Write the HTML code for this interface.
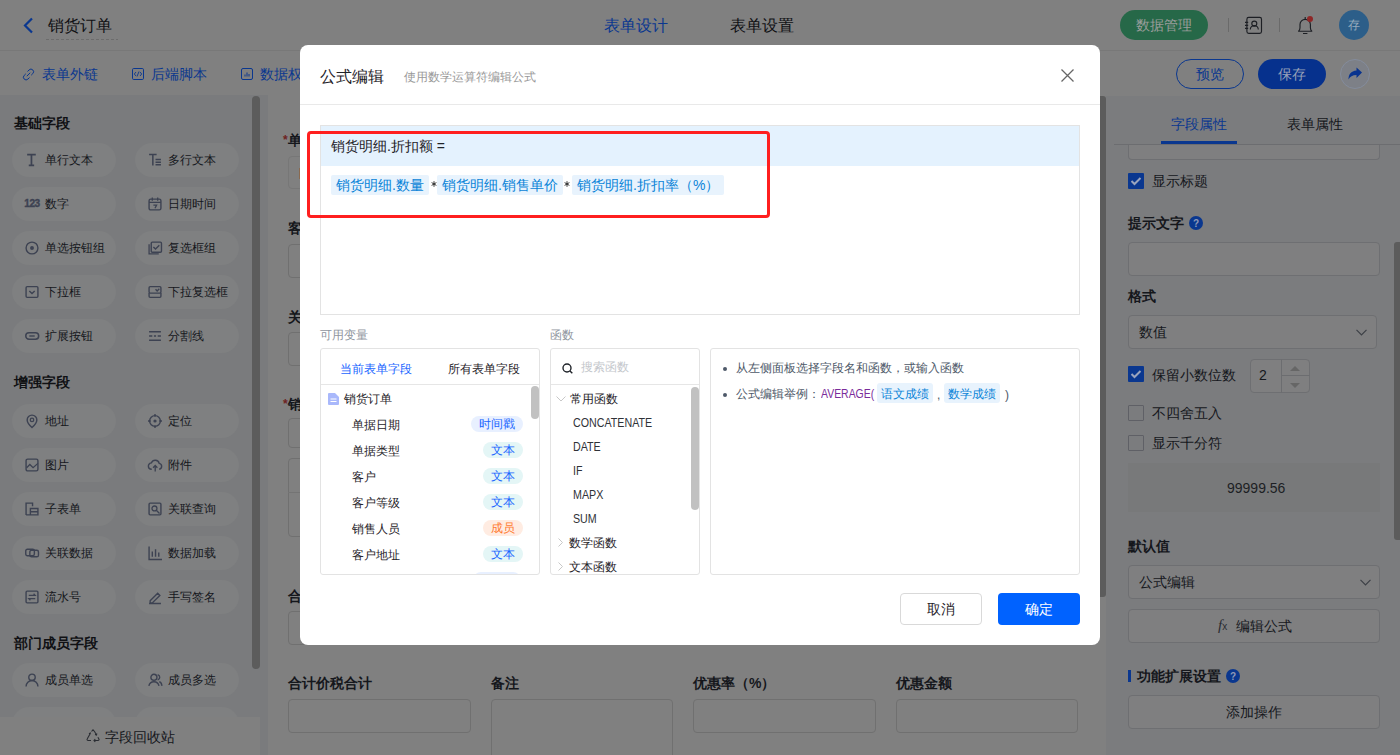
<!DOCTYPE html>
<html><head><meta charset="utf-8">
<style>
*{box-sizing:border-box;margin:0;padding:0}
html,body{width:1400px;height:755px;overflow:hidden;background:#fff;font-family:"Liberation Sans",sans-serif;color:#1f2329}
.abs{position:absolute}
#page{position:absolute;left:0;top:0;width:1400px;height:755px;background:#fff}
.hdr{position:absolute;left:0;top:0;width:1400px;height:51px;background:#808080;border-bottom:1px solid #787878}
.tb{position:absolute;left:0;top:51px;width:1400px;height:45px;background:#808080}
.side{position:absolute;left:0;top:95px;width:268px;height:660px;background:#7a7b7d}
.canvas{position:absolute;left:268px;top:96px;width:838px;height:659px;background:#808080}
.rp{position:absolute;left:1106px;top:96px;width:294px;height:659px;background:#7b7c7e}
.t{position:absolute;white-space:nowrap;line-height:1}
.pill{position:absolute;width:104px;height:34px;border-radius:17px;background:#7f8081}
.pill span{position:absolute;left:33px;top:10px;font-size:12px;line-height:14px;color:#15171c}
.pill svg{position:absolute;left:13px;top:10px;overflow:visible}
.sect{position:absolute;left:14px;font-size:14px;font-weight:bold;line-height:16px;color:#101114}
#mask{position:absolute;left:0;top:0;width:1400px;height:755px;background:rgba(0,0,0,.5)}
#modal{position:absolute;left:300px;top:45px;width:800px;height:600px;background:#fff;border-radius:8px;overflow:hidden}

.tok{position:absolute;top:49px;height:20px;background:#e8f3fd;border-radius:2px;color:#0a84d8;font-size:14px;line-height:20px;padding-left:5px;white-space:nowrap}
.tok2{position:absolute;top:34px;height:20px;background:#e8f3fd;border-radius:3px;color:#0a84d8;font-size:12px;line-height:22px;padding-left:4px;white-space:nowrap}
.pnl{border:1px solid #e3e3e3;border-radius:3px;overflow:hidden}
.vr{left:31px;font-size:12px;line-height:14px;color:#1f2329}
.tag{position:absolute;left:162px;width:40px;height:16px;border-radius:8px;font-size:12px;line-height:16px;text-align:center;white-space:nowrap}
.tb1{background:#e8f0ff;color:#1a66ff}
.tc{background:#e4f6f6;color:#1a66ff}
.to{background:#ffece2;color:#ff7a2e}
.fn{left:22px;font-size:12px;line-height:14px;color:#2f3237;transform:scaleX(.89);transform-origin:0 0}

.flbl{font-size:14px;font-weight:bold;line-height:16px;color:#15171c}
.finp{border:1px solid #707070;border-radius:4px}
.rinp{border:1px solid #6e6f72;border-radius:4px;background:#7f7f80}
</style></head><body>
















<div id="page">
  <div class="hdr">
    <svg class="abs" style="left:22px;top:17px" width="12" height="17" viewBox="0 0 12 17"><path d="M10 1.5L3 8.5l7 7" stroke="#0a378f" stroke-width="2.2" fill="none"/></svg>
    <div class="t" style="left:48px;top:17px;font-size:16px;line-height:17px;color:#101114">销货订单</div>
    <div class="abs" style="left:46px;top:39px;width:72px;height:1px;background:repeating-linear-gradient(90deg,#6c6c6c 0 3px,transparent 3px 5px)"></div>
    <div class="t" style="left:604px;top:17px;font-size:16px;line-height:17px;color:#0a378f">表单设计</div>
    <div class="t" style="left:730px;top:17px;font-size:16px;line-height:17px;color:#101114">表单设置</div>
    <div class="abs" style="left:1120px;top:10px;width:88px;height:30px;border-radius:15px;background:#266848"></div>
    <div class="t" style="left:1136px;top:17px;font-size:14px;line-height:16px;color:#9a9d9b">数据管理</div>
    <div class="abs" style="left:1228px;top:18px;width:1px;height:14px;background:#6a6a6a"></div>
    <svg class="abs" style="left:1244px;top:16px" width="20" height="19" viewBox="0 0 20 19"><rect x="2.9" y="1.4" width="14.6" height="16" rx="1.8" stroke="#1d1f24" stroke-width="1.15" fill="none"/><circle cx="10.3" cy="7.6" r="2.5" stroke="#1d1f24" stroke-width="1.15" fill="none"/><path d="M6.3 13.6a4 4 0 0 1 8 0M1 6.3h3.2M1 9.3h3.2M1 12.3h3.2" stroke="#1d1f24" stroke-width="1.15" fill="none"/></svg>
    <div class="abs" style="left:1279px;top:18px;width:1px;height:14px;background:#6a6a6a"></div>
    <svg class="abs" style="left:1296px;top:15px" width="18" height="20" viewBox="0 0 18 20"><path d="M2.6 16.2c.9-.9 1.4-2 1.4-3.4V9.6a5.2 5.2 0 0 1 10.4 0v3.2c0 1.4.5 2.5 1.4 3.4z" stroke="#1d1f24" stroke-width="1.15" fill="none" stroke-linejoin="round"/><path d="M7 18.5h4.4M9.2 2v2" stroke="#1d1f24" stroke-width="1.15"/><circle cx="14" cy="3.9" r="3" fill="#8e2727"/></svg>
    <div class="abs" style="left:1339px;top:10px;width:30px;height:30px;border-radius:15px;background:#2c5e89"></div>
    <div class="t" style="left:1348px;top:18px;font-size:12px;line-height:14px;color:#97abbd">存</div>
  </div>
  <div class="tb">
    <svg class="abs" style="left:22px;top:17px" width="13" height="13" viewBox="0 0 13 13"><path d="M5.5 3.5l1.6-1.6a2.6 2.6 0 0 1 3.7 3.7L9.2 7.2M7.5 9.5L5.9 11.1a2.6 2.6 0 0 1-3.7-3.7L3.8 5.8M4.8 8.2l3.4-3.4" stroke="#0a378f" stroke-width="1" fill="none"/></svg>
    <div class="t" style="left:42px;top:15px;font-size:14px;line-height:16px;color:#0a378f">表单外链</div>
    <svg class="abs" style="left:132px;top:17px" width="12" height="12" viewBox="0 0 12 12"><rect x="0.5" y="0.5" width="11" height="11" rx="1.2" stroke="#0a378f" stroke-width="1" fill="none"/><path d="M4 4L2.3 6 4 8M8 4l1.7 2L8 8M7 3.5L5 8.5" stroke="#0a378f" stroke-width="0.9" fill="none"/></svg>
    <div class="t" style="left:151px;top:15px;font-size:14px;line-height:16px;color:#0a378f">后端脚本</div>
    <svg class="abs" style="left:241px;top:17px" width="12" height="12" viewBox="0 0 12 12"><rect x="0.5" y="0.5" width="11" height="11" rx="1.5" stroke="#0a378f" stroke-width="1" fill="none"/><path d="M4 8.5V6.5M6 8.5V4.5M8 8.5V6" stroke="#0a378f" stroke-width="1" fill="none"/></svg>
    <div class="t" style="left:260px;top:15px;font-size:14px;line-height:16px;color:#0a378f">数据权限</div>
    <div class="abs" style="left:1176px;top:8px;width:68px;height:30px;border-radius:15px;border:1px solid #0a378f"></div>
    <div class="t" style="left:1196px;top:15px;font-size:14px;line-height:16px;color:#0a378f">预览</div>
    <div class="abs" style="left:1258px;top:8px;width:68px;height:30px;border-radius:15px;background:#06318d"></div>
    <div class="t" style="left:1278px;top:15px;font-size:14px;line-height:16px;color:#97a0b8">保存</div>
    <div class="abs" style="left:1340px;top:8px;width:30px;height:30px;border-radius:15px;border:1px solid #848c9c;background:#7d8087"></div>
    <svg class="abs" style="left:1347px;top:15px" width="16" height="16" viewBox="0 0 16 16"><path d="M15 6.5L9.5 1.5v3C4 5 1.5 8.5 1.5 13.5c1.5-3 4-4.5 8-4.5v3z" fill="#08338f"/></svg>
  </div>
  <div class="side">
    <div class="sect" style="top:20px">基础字段</div>
    <div class="sect" style="top:279px">增强字段</div>
    <div class="sect" style="top:540px">部门成员字段</div>
    <div class="abs" style="left:252px;top:1px;width:8px;height:573px;border-radius:4px;background:#5c5c5c"></div>
  </div>
  <div class="pill" style="left:12px;top:143px"><svg width="14" height="14" viewBox="0 0 13 13"><path d="M2 1.5h8M6 1.5v10M3.5 11.5h5" stroke="#3d4252" stroke-width="1.6" fill="none"/></svg><span>单行文本</span></div>
<div class="pill" style="left:135px;top:143px"><svg width="14" height="14" viewBox="0 0 13 13"><path d="M1 1.5h7M4.5 1.5v10M7 6h5M7 8.5h5M7 11h5" stroke="#3d4252" stroke-width="1.4" fill="none"/></svg><span>多行文本</span></div>
<div class="pill" style="left:12px;top:187px"><svg width="14" height="14" viewBox="0 0 13 13"><text x="-0.6" y="9.3" font-family="Liberation Sans" font-weight="700" font-size="9.4" letter-spacing="-0.5" stroke="#3d4252" stroke-width="0.35" fill="#3d4252">123</text></svg><span>数字</span></div>
<div class="pill" style="left:135px;top:187px"><svg width="14" height="14" viewBox="0 0 13 13"><rect x="1" y="2" width="11" height="10" rx="1.5" stroke="#3d4252" stroke-width="1.3" fill="none"/><path d="M1 5h11M4 0.5v3M9 0.5v3M5 7.5h3l-1.5 3" stroke="#3d4252" stroke-width="1.2" fill="none"/></svg><span>日期时间</span></div>
<div class="pill" style="left:12px;top:231px"><svg width="14" height="14" viewBox="0 0 13 13"><circle cx="6.5" cy="6.5" r="5.5" stroke="#3d4252" stroke-width="1.3" fill="none"/><circle cx="6.5" cy="6.5" r="1.8" fill="#3d4252"/></svg><span>单选按钮组</span></div>
<div class="pill" style="left:135px;top:231px"><svg width="14" height="14" viewBox="0 0 13 13"><path d="M1 3v9h9" stroke="#3d4252" stroke-width="1.2" fill="none"/><rect x="3" y="1" width="9.5" height="9.5" rx="1" stroke="#3d4252" stroke-width="1.3" fill="none"/><path d="M5 5.5l2 2 3.5-3.5" stroke="#3d4252" stroke-width="1.3" fill="none"/></svg><span>复选框组</span></div>
<div class="pill" style="left:12px;top:275px"><svg width="14" height="14" viewBox="0 0 13 13"><rect x="1" y="1.5" width="11" height="10" rx="1" stroke="#3d4252" stroke-width="1.3" fill="none"/><path d="M4 5.5l2.5 2.5 2.5-2.5" stroke="#3d4252" stroke-width="1.3" fill="none"/></svg><span>下拉框</span></div>
<div class="pill" style="left:135px;top:275px"><svg width="14" height="14" viewBox="0 0 13 13"><rect x="1" y="1.5" width="11" height="6" rx="1" stroke="#3d4252" stroke-width="1.3" fill="none"/><path d="M1 7.5v3a1 1 0 0 0 1 1h9a1 1 0 0 0 1-1v-3M7 4l1.5 1.5 2-2" stroke="#3d4252" stroke-width="1.3" fill="none"/></svg><span>下拉复选框</span></div>
<div class="pill" style="left:12px;top:319px"><svg width="14" height="14" viewBox="0 0 13 13"><rect x="0.7" y="3.5" width="12" height="6" rx="3" stroke="#3d4252" stroke-width="1.4" fill="none"/><path d="M4 6.5h5" stroke="#3d4252" stroke-width="1.3"/></svg><span>扩展按钮</span></div>
<div class="pill" style="left:135px;top:319px"><svg width="14" height="14" viewBox="0 0 13 13"><path d="M1 2.5h11M1 6.5h3M5.5 6.5h2M9 6.5h3M1 10.5h11" stroke="#3d4252" stroke-width="1.3" fill="none"/></svg><span>分割线</span></div>
<div class="pill" style="left:12px;top:404px"><svg width="14" height="14" viewBox="0 0 13 13"><path d="M6.5 12.5s-4.5-4-4.5-7a4.5 4.5 0 0 1 9 0c0 3-4.5 7-4.5 7z" stroke="#3d4252" stroke-width="1.3" fill="none"/><circle cx="6.5" cy="5.5" r="1.6" stroke="#3d4252" stroke-width="1.2" fill="none"/></svg><span>地址</span></div>
<div class="pill" style="left:135px;top:404px"><svg width="14" height="14" viewBox="0 0 13 13"><circle cx="6.5" cy="6.5" r="5" stroke="#3d4252" stroke-width="1.3" fill="none"/><circle cx="6.5" cy="6.5" r="1.5" fill="#3d4252"/><path d="M6.5 0v2.5M6.5 10.5v2.5M0 6.5h2.5M10.5 6.5h2.5" stroke="#3d4252" stroke-width="1.3"/></svg><span>定位</span></div>
<div class="pill" style="left:12px;top:448px"><svg width="14" height="14" viewBox="0 0 13 13"><rect x="1" y="1" width="11" height="11" rx="1.5" stroke="#3d4252" stroke-width="1.3" fill="none"/><path d="M1.5 9l3-3 3 3 4.5-4" stroke="#3d4252" stroke-width="1.2" fill="none"/></svg><span>图片</span></div>
<div class="pill" style="left:135px;top:448px"><svg width="14" height="14" viewBox="0 0 13 13"><path d="M3.5 10.5a3 3 0 0 1-.3-6 3.8 3.8 0 0 1 7.2.5 2.8 2.8 0 0 1 0 5.5" stroke="#3d4252" stroke-width="1.3" fill="none"/><path d="M6.7 12.5V7M4.7 9l2-2 2 2" stroke="#3d4252" stroke-width="1.2" fill="none"/></svg><span>附件</span></div>
<div class="pill" style="left:12px;top:492px"><svg width="14" height="14" viewBox="0 0 13 13"><path d="M1 12V1h6v3M1 12h11V6H5v6M5 9h7" stroke="#3d4252" stroke-width="1.3" fill="none"/></svg><span>子表单</span></div>
<div class="pill" style="left:135px;top:492px"><svg width="14" height="14" viewBox="0 0 13 13"><rect x="1" y="1" width="11" height="11" rx="1" stroke="#3d4252" stroke-width="1.3" fill="none"/><circle cx="6" cy="6" r="2.3" stroke="#3d4252" stroke-width="1.2" fill="none"/><path d="M7.7 7.7l3 3" stroke="#3d4252" stroke-width="1.2"/></svg><span>关联查询</span></div>
<div class="pill" style="left:12px;top:536px"><svg width="14" height="14" viewBox="0 0 13 13"><rect x="0.7" y="3" width="8" height="6" rx="1.5" stroke="#3d4252" stroke-width="1.3" fill="none"/><rect x="4.5" y="4" width="8" height="6" rx="1.5" stroke="#3d4252" stroke-width="1.3" fill="none"/></svg><span>关联数据</span></div>
<div class="pill" style="left:135px;top:536px"><svg width="14" height="14" viewBox="0 0 13 13"><path d="M1 0.5v12h12M4 5v5M7 3v7M10 6v4" stroke="#3d4252" stroke-width="1.3" fill="none"/></svg><span>数据加载</span></div>
<div class="pill" style="left:12px;top:580px"><svg width="14" height="14" viewBox="0 0 13 13"><rect x="1" y="1" width="11" height="11" rx="1" stroke="#3d4252" stroke-width="1.3" fill="none"/><path d="M3.5 5h6l-1.5-1.5M9.5 8h-6l1.5 1.5" stroke="#3d4252" stroke-width="1.1" fill="none"/></svg><span>流水号</span></div>
<div class="pill" style="left:135px;top:580px"><svg width="14" height="14" viewBox="0 0 13 13"><path d="M2 10l7-7 2 2-7 7H2zM1 12.5h11" stroke="#3d4252" stroke-width="1.3" fill="none"/></svg><span>手写签名</span></div>
<div class="pill" style="left:12px;top:663px"><svg width="14" height="14" viewBox="0 0 13 13"><circle cx="6.5" cy="4" r="3" stroke="#3d4252" stroke-width="1.3" fill="none"/><path d="M1 12.5a5.5 5.5 0 0 1 11 0" stroke="#3d4252" stroke-width="1.3" fill="none"/></svg><span>成员单选</span></div>
<div class="pill" style="left:135px;top:663px"><svg width="14" height="14" viewBox="0 0 13 13"><circle cx="5.5" cy="4" r="2.8" stroke="#3d4252" stroke-width="1.3" fill="none"/><path d="M0.8 12a4.8 4.8 0 0 1 9.4 0M9 1.5a2.6 2.6 0 0 1 0 5M10.5 8a4 4 0 0 1 2.3 4" stroke="#3d4252" stroke-width="1.3" fill="none"/></svg><span>成员多选</span></div>
<div class="pill" style="left:12px;top:707px"><svg width="14" height="14" viewBox="0 0 13 13"><circle cx="6.5" cy="4" r="3" stroke="#3d4252" stroke-width="1.3" fill="none"/><path d="M1 12.5a5.5 5.5 0 0 1 11 0" stroke="#3d4252" stroke-width="1.3" fill="none"/></svg><span>部门单选</span></div>
<div class="pill" style="left:135px;top:707px"><svg width="14" height="14" viewBox="0 0 13 13"><circle cx="5.5" cy="4" r="2.8" stroke="#3d4252" stroke-width="1.3" fill="none"/><path d="M0.8 12a4.8 4.8 0 0 1 9.4 0M9 1.5a2.6 2.6 0 0 1 0 5M10.5 8a4 4 0 0 1 2.3 4" stroke="#3d4252" stroke-width="1.3" fill="none"/></svg><span>部门多选</span></div>
  <div class="abs" style="left:0;top:717px;width:260px;height:38px;background:#808080"></div>
  <svg class="abs" style="left:86px;top:729px" width="14" height="14" viewBox="0 0 14 14"><path d="M5.5 2.5L7 0.8l1.5 1.7 2 3.3M10.8 4.5l-.3 1.5-1.5-.5M4 5L2 8.5 1.2 10a1 1 0 0 0 .9 1.5H5M3 4.3l1 .7.5-1.5M8 11.5h4a1 1 0 0 0 .9-1.5l-1-1.8M9.3 10l-1.3 1.5 1.3 1.5" stroke="#2a2d33" stroke-width="1.1" fill="none"/></svg>
  <div class="t" style="left:105px;top:729px;font-size:14px;line-height:16px;color:#15171c">字段回收站</div>
  <div class="canvas">
    <div class="t flbl" style="left:15px;top:36px"><span style="color:#6e2222;font-size:12px;vertical-align:1px">*</span>单据编号</div>
<div class="abs" style="left:20px;top:60px;width:192px;height:33px;border:1px solid #777;border-radius:4px"></div>
<div class="abs" style="left:31px;top:72px;width:1px;height:11px;background:#8a6a50"></div>
<div class="t flbl" style="left:20px;top:124px">客户</div>
<div class="abs finp" style="left:20px;top:148px;width:192px;height:34px"></div>
<div class="t flbl" style="left:20px;top:213px">关联客户</div>
<div class="abs finp" style="left:20px;top:236px;width:192px;height:34px"></div>
<div class="t flbl" style="left:15px;top:300px"><span style="color:#6e2222;font-size:12px;vertical-align:1px">*</span>销货明细</div>
<div class="abs finp" style="left:20px;top:322px;width:192px;height:30px"></div>
<div class="abs finp" style="left:20px;top:362px;width:792px;height:79px"></div>
<div class="abs" style="left:20px;top:396px;width:812px;height:1px;background:#747474"></div>
<div class="t flbl" style="left:20px;top:492px">合计金额</div>
<div class="abs finp" style="left:20px;top:515px;width:192px;height:34px"></div>
<div class="t flbl" style="left:20px;top:579px">合计价税合计</div>
<div class="abs finp" style="left:20px;top:603px;width:183px;height:34px"></div>
<div class="t flbl" style="left:223px;top:579px">备注</div>
<div class="abs finp" style="left:223px;top:603px;width:182px;height:81px"></div>
<div class="t flbl" style="left:425px;top:579px">优惠率（%）</div>
<div class="abs finp" style="left:425px;top:603px;width:183px;height:34px"></div>
<div class="t flbl" style="left:628px;top:579px">优惠金额</div>
<div class="abs finp" style="left:628px;top:603px;width:182px;height:34px"></div>
<div class="abs" style="left:832px;top:0;width:6px;height:501px;border-radius:0 3px 3px 0;background:#5c5c5c"></div>
  </div>
  <div class="rp">
    <div class="abs rinp" style="left:22px;top:30px;width:252px;height:34px;border-top:none;border-radius:0 0 4px 4px"></div>
<div class="abs" style="left:0;top:0;width:294px;height:48px;background:#7b7c7e"></div>
<div class="t" style="left:65px;top:20px;font-size:14px;line-height:16px;color:#0a378f">字段属性</div>
<div class="t" style="left:181px;top:20px;font-size:14px;line-height:16px;color:#15171c">表单属性</div>
<div class="abs" style="left:8px;top:48px;width:294px;height:1px;background:#6c6d70"></div>
<div class="abs" style="left:55px;top:45px;width:76px;height:3px;background:#0a378f"></div>
<svg class="abs" style="left:22px;top:77px" width="16" height="16" viewBox="0 0 16 16"><rect width="16" height="16" rx="1" fill="#0a378f"/><path d="M3.5 8l3 3 6-6" stroke="#9aa4bd" stroke-width="2" fill="none"/></svg>
<div class="t" style="left:46px;top:77px;font-size:14px;line-height:16px;color:#15171c">显示标题</div>
<div class="t" style="left:22px;top:119px;font-size:14px;line-height:16px;font-weight:bold;color:#15171c">提示文字</div>
<svg class="abs" style="left:83px;top:120px" width="14" height="14" viewBox="0 0 14 14"><circle cx="7" cy="7" r="7" fill="#0a378f"/><text x="7" y="11" text-anchor="middle" font-family="Liberation Sans" font-weight="bold" font-size="10" fill="#8e9ab6">?</text></svg>
<div class="abs rinp" style="left:22px;top:146px;width:252px;height:34px;"></div>
<div class="t" style="left:22px;top:192px;font-size:14px;line-height:16px;font-weight:bold;color:#15171c">格式</div>
<div class="abs rinp" style="left:22px;top:219px;width:249px;height:34px;"></div>
<div class="t" style="left:33px;top:228px;font-size:14px;line-height:16px;color:#15171c">数值</div>
<svg class="abs" style="left:250px;top:233px" width="11" height="7" viewBox="0 0 11 7"><path d="M0.5 0.8L5.5 5.8L10.5 0.8" stroke="#3d4046" stroke-width="1.2" fill="none"/></svg>
<svg class="abs" style="left:22px;top:270px" width="16" height="16" viewBox="0 0 16 16"><rect width="16" height="16" rx="1" fill="#0a378f"/><path d="M3.5 8l3 3 6-6" stroke="#9aa4bd" stroke-width="2" fill="none"/></svg>
<div class="t" style="left:46px;top:271px;font-size:14px;line-height:16px;color:#15171c">保留小数位数</div>
<div class="abs rinp" style="left:144px;top:263px;width:60px;height:34px;"></div>
<div class="abs" style="left:175px;top:263px;width:1px;height:34px;background:#6c6d70"></div>
<div class="abs" style="left:175px;top:279px;width:29px;height:1px;background:#6c6d70"></div>
<svg class="abs" style="left:184px;top:270px" width="10" height="5" viewBox="0 0 10 5"><path d="M0 5L5 0L10 5z" fill="#666"/></svg>
<svg class="abs" style="left:184px;top:287px" width="10" height="5" viewBox="0 0 10 5"><path d="M0 0L5 5L10 0z" fill="#666"/></svg>
<div class="t" style="left:153px;top:271px;font-size:14px;line-height:16px;color:#15171c">2</div>
<div class="abs" style="left:22px;top:309px;width:16px;height:16px;border:1px solid #5f6066;border-radius:1px"></div>
<div class="t" style="left:46px;top:309px;font-size:14px;line-height:16px;color:#15171c">不四舍五入</div>
<div class="abs" style="left:22px;top:339px;width:16px;height:16px;border:1px solid #5f6066;border-radius:1px"></div>
<div class="t" style="left:46px;top:339px;font-size:14px;line-height:16px;color:#15171c">显示千分符</div>
<div class="abs" style="left:22px;top:367px;width:252px;height:49px;background:#78797a"></div>
<div class="t" style="left:121px;top:384px;font-size:14px;line-height:16px;color:#1d1f24">99999.56</div>
<div class="t" style="left:22px;top:442px;font-size:14px;line-height:16px;font-weight:bold;color:#15171c">默认值</div>
<div class="abs rinp" style="left:22px;top:469px;width:252px;height:34px;"></div>
<div class="t" style="left:33px;top:478px;font-size:14px;line-height:16px;color:#15171c">公式编辑</div>
<svg class="abs" style="left:254px;top:483px" width="11" height="7" viewBox="0 0 11 7"><path d="M0.5 0.8L5.5 5.8L10.5 0.8" stroke="#3d4046" stroke-width="1.2" fill="none"/></svg>
<div class="abs rinp" style="left:22px;top:513px;width:252px;height:34px;"></div>
<div class="t" style="left:112px;top:521px;font-family:'Liberation Serif',serif;font-style:italic;font-size:15px;line-height:16px;color:#2a2c31">f<span style="font-size:10px;font-style:normal;font-family:'Liberation Sans'">x</span></div>
<div class="t" style="left:130px;top:522px;font-size:14px;line-height:16px;color:#15171c">编辑公式</div>
<div class="abs" style="left:22px;top:574px;width:3px;height:12px;background:#0a378f"></div>
<div class="t" style="left:31px;top:572px;font-size:14px;line-height:16px;font-weight:bold;color:#15171c">功能扩展设置</div>
<svg class="abs" style="left:120px;top:573px" width="14" height="14" viewBox="0 0 14 14"><circle cx="7" cy="7" r="7" fill="#0a378f"/><text x="7" y="11" text-anchor="middle" font-family="Liberation Sans" font-weight="bold" font-size="10" fill="#8e9ab6">?</text></svg>
<div class="abs rinp" style="left:22px;top:599px;width:252px;height:34px;"></div>
<div class="t" style="left:120px;top:608px;font-size:14px;line-height:16px;color:#15171c">添加操作</div>
<div class="abs" style="left:288px;top:146px;width:6px;height:298px;border-radius:3px 0 0 3px;background:#5c5c5c"></div>
  </div>
</div>
<div id="modal">
  <div class="t" style="left:20px;top:23px;font-size:16px;line-height:17px;color:#1f2329">公式编辑</div>
  <div class="t" style="left:104px;top:25px;font-size:12px;line-height:14px;color:#999">使用数学运算符编辑公式</div>
  <svg class="abs" style="left:761px;top:24px" width="13" height="13" viewBox="0 0 13 13"><path d="M0.5 0.5L12.5 12.5M12.5 0.5L0.5 12.5" stroke="#666" stroke-width="1.3"/></svg>
  <div class="abs" style="left:0;top:59px;width:800px;height:1px;background:#e9e9e9"></div>
  <!-- formula box -->
  <div class="abs" style="left:20px;top:80px;width:760px;height:190px;border:1px solid #e3e3e3">
    <div class="abs" style="left:0;top:0;width:758px;height:40px;background:#e4f2fe"></div>
    <div class="t" style="left:10px;top:12px;font-size:14px;line-height:16px;color:#1f2329">销货明细.折扣额 =</div>
    <div class="tok" style="left:10px;width:98px">销货明细.数量</div>
    <svg class="abs" style="left:110px;top:55px" width="6" height="6" viewBox="0 0 6 6"><path d="M3 0.2v5.6M0.6 1.6l4.8 2.8M0.6 4.4l4.8-2.8" stroke="#222" stroke-width="0.9"/></svg>
    <div class="tok" style="left:116px;width:126px">销货明细.销售单价</div>
    <svg class="abs" style="left:243px;top:55px" width="6" height="6" viewBox="0 0 6 6"><path d="M3 0.2v5.6M0.6 1.6l4.8 2.8M0.6 4.4l4.8-2.8" stroke="#222" stroke-width="0.9"/></svg>
    <div class="tok" style="left:251px;width:152px">销货明细.折扣率（%）</div>
  </div>
  <div class="abs" style="left:7px;top:86px;width:463px;height:87px;border:3px solid #ff1f1f;border-radius:4px"></div>
  <div class="t" style="left:20px;top:283px;font-size:12px;line-height:14px;color:#8f959e">可用变量</div>
  <div class="t" style="left:250px;top:283px;font-size:12px;line-height:14px;color:#8f959e">函数</div>
  <!-- variables panel -->
  <div class="abs pnl" style="left:20px;top:303px;width:220px;height:227px">
    <div class="t" style="left:19px;top:13px;font-size:12px;line-height:14px;color:#1a66ff">当前表单字段</div>
    <div class="t" style="left:127px;top:13px;font-size:12px;line-height:14px;color:#1f2329">所有表单字段</div>
    <div class="abs" style="left:0;top:35px;width:218px;height:1px;background:#e6e6e6"></div>
    <svg class="abs" style="left:7px;top:44px" width="11" height="12" viewBox="0 0 11 12"><path d="M0 1a1 1 0 0 1 1-1h6l4 4v7a1 1 0 0 1-1 1H1a1 1 0 0 1-1-1z" fill="#a9b8fb"/><path d="M2.5 6h6M2.5 8.5h6" stroke="#fff" stroke-width="1"/></svg>
    <div class="t" style="left:23px;top:43px;font-size:12px;line-height:14px">销货订单</div>
    <div class="t vr" style="top:69px">单据日期</div><div class="tag tb1" style="top:67px;left:150px;width:52px">时间戳</div>
    <div class="t vr" style="top:95px">单据类型</div><div class="tag tc" style="top:93px">文本</div>
    <div class="t vr" style="top:121px">客户</div><div class="tag tc" style="top:119px">文本</div>
    <div class="t vr" style="top:147px">客户等级</div><div class="tag tc" style="top:145px">文本</div>
    <div class="t vr" style="top:173px">销售人员</div><div class="tag to" style="top:171px">成员</div>
    <div class="t vr" style="top:199px">客户地址</div><div class="tag tc" style="top:197px">文本</div>
    <div class="tag tb1" style="top:223px;left:152px;width:48px"></div>
    <div class="abs" style="left:210px;top:37px;width:8px;height:33px;border-radius:4px;background:#c1c1c1"></div>
  </div>
  <!-- functions panel -->
  <div class="abs pnl" style="left:250px;top:303px;width:150px;height:227px">
    <svg class="abs" style="left:11px;top:14px" width="11" height="11" viewBox="0 0 11 11"><circle cx="5" cy="5" r="4" fill="none" stroke="#1f2329" stroke-width="1.4"/><path d="M8 8l2.3 2.3" stroke="#1f2329" stroke-width="1.4"/></svg>
    <div class="t" style="left:30px;top:11px;font-size:12px;line-height:14px;color:#c4c7cc">搜索函数</div>
    <div class="abs" style="left:0;top:35px;width:148px;height:1px;background:#e6e6e6"></div>
    <svg class="abs" style="left:5px;top:47px" width="10" height="6" viewBox="0 0 10 6"><path d="M0.5 0.5L5 5L9.5 0.5" fill="none" stroke="#c8c8c8" stroke-width="1"/></svg>
    <div class="t" style="left:19px;top:43px;font-size:12px;line-height:14px">常用函数</div>
    <div class="t fn" style="top:67px">CONCATENATE</div>
    <div class="t fn" style="top:91px">DATE</div>
    <div class="t fn" style="top:115px">IF</div>
    <div class="t fn" style="top:139px">MAPX</div>
    <div class="t fn" style="top:163px">SUM</div>
    <svg class="abs" style="left:7px;top:189px" width="5" height="9" viewBox="0 0 5 9"><path d="M0.5 0.5L4.5 4.5L0.5 8.5" fill="none" stroke="#c8c8c8" stroke-width="1"/></svg><svg class="abs" style="left:7px;top:213px" width="5" height="9" viewBox="0 0 5 9"><path d="M0.5 0.5L4.5 4.5L0.5 8.5" fill="none" stroke="#c8c8c8" stroke-width="1"/></svg>
    <div class="t" style="left:18px;top:187px;font-size:12px;line-height:14px">数学函数</div>
    <div class="t" style="left:18px;top:211px;font-size:12px;line-height:14px">文本函数</div>
    <div class="abs" style="left:140px;top:38px;width:8px;height:123px;border-radius:4px;background:#c1c1c1"></div>
  </div>
  <!-- description panel -->
  <div class="abs pnl" style="left:410px;top:303px;width:370px;height:227px">
    <div class="abs" style="left:12px;top:18px;width:4px;height:4px;border-radius:2px;background:#4e5969"></div>
    <div class="t" style="left:25px;top:12px;font-size:12px;line-height:14px;color:#4e5969">从左侧面板选择字段名和函数，或输入函数</div>
    <div class="abs" style="left:12px;top:44px;width:4px;height:4px;border-radius:2px;background:#4e5969"></div>
    <div class="t" style="left:25px;top:38px;font-size:12px;line-height:14px;color:#4e5969">公式编辑举例：</div><div class="t" style="left:110px;top:38px;font-size:12px;line-height:14px;color:#7a2b9a;transform:scaleX(.87);transform-origin:0 0">AVERAGE(</div>
    <div class="tok2" style="left:166px;width:56px">语文成绩</div>
    <div class="t" style="left:226px;top:39px;font-size:12px;line-height:14px;color:#4e5969">,</div>
    <div class="tok2" style="left:233px;width:56px">数学成绩</div>
    <div class="t" style="left:294px;top:39px;font-size:12px;line-height:14px;color:#4e5969">)</div>
  </div>
  <div class="abs" style="left:600px;top:548px;width:82px;height:32px;border:1px solid #d9d9d9;border-radius:4px"></div>
  <div class="t" style="left:627px;top:556px;font-size:14px;line-height:16px;color:#1f2329">取消</div>
  <div class="abs" style="left:698px;top:548px;width:82px;height:32px;background:#0062ff;border-radius:4px"></div>
  <div class="t" style="left:725px;top:556px;font-size:14px;line-height:16px;color:#fff">确定</div>
</div>

</body></html>
